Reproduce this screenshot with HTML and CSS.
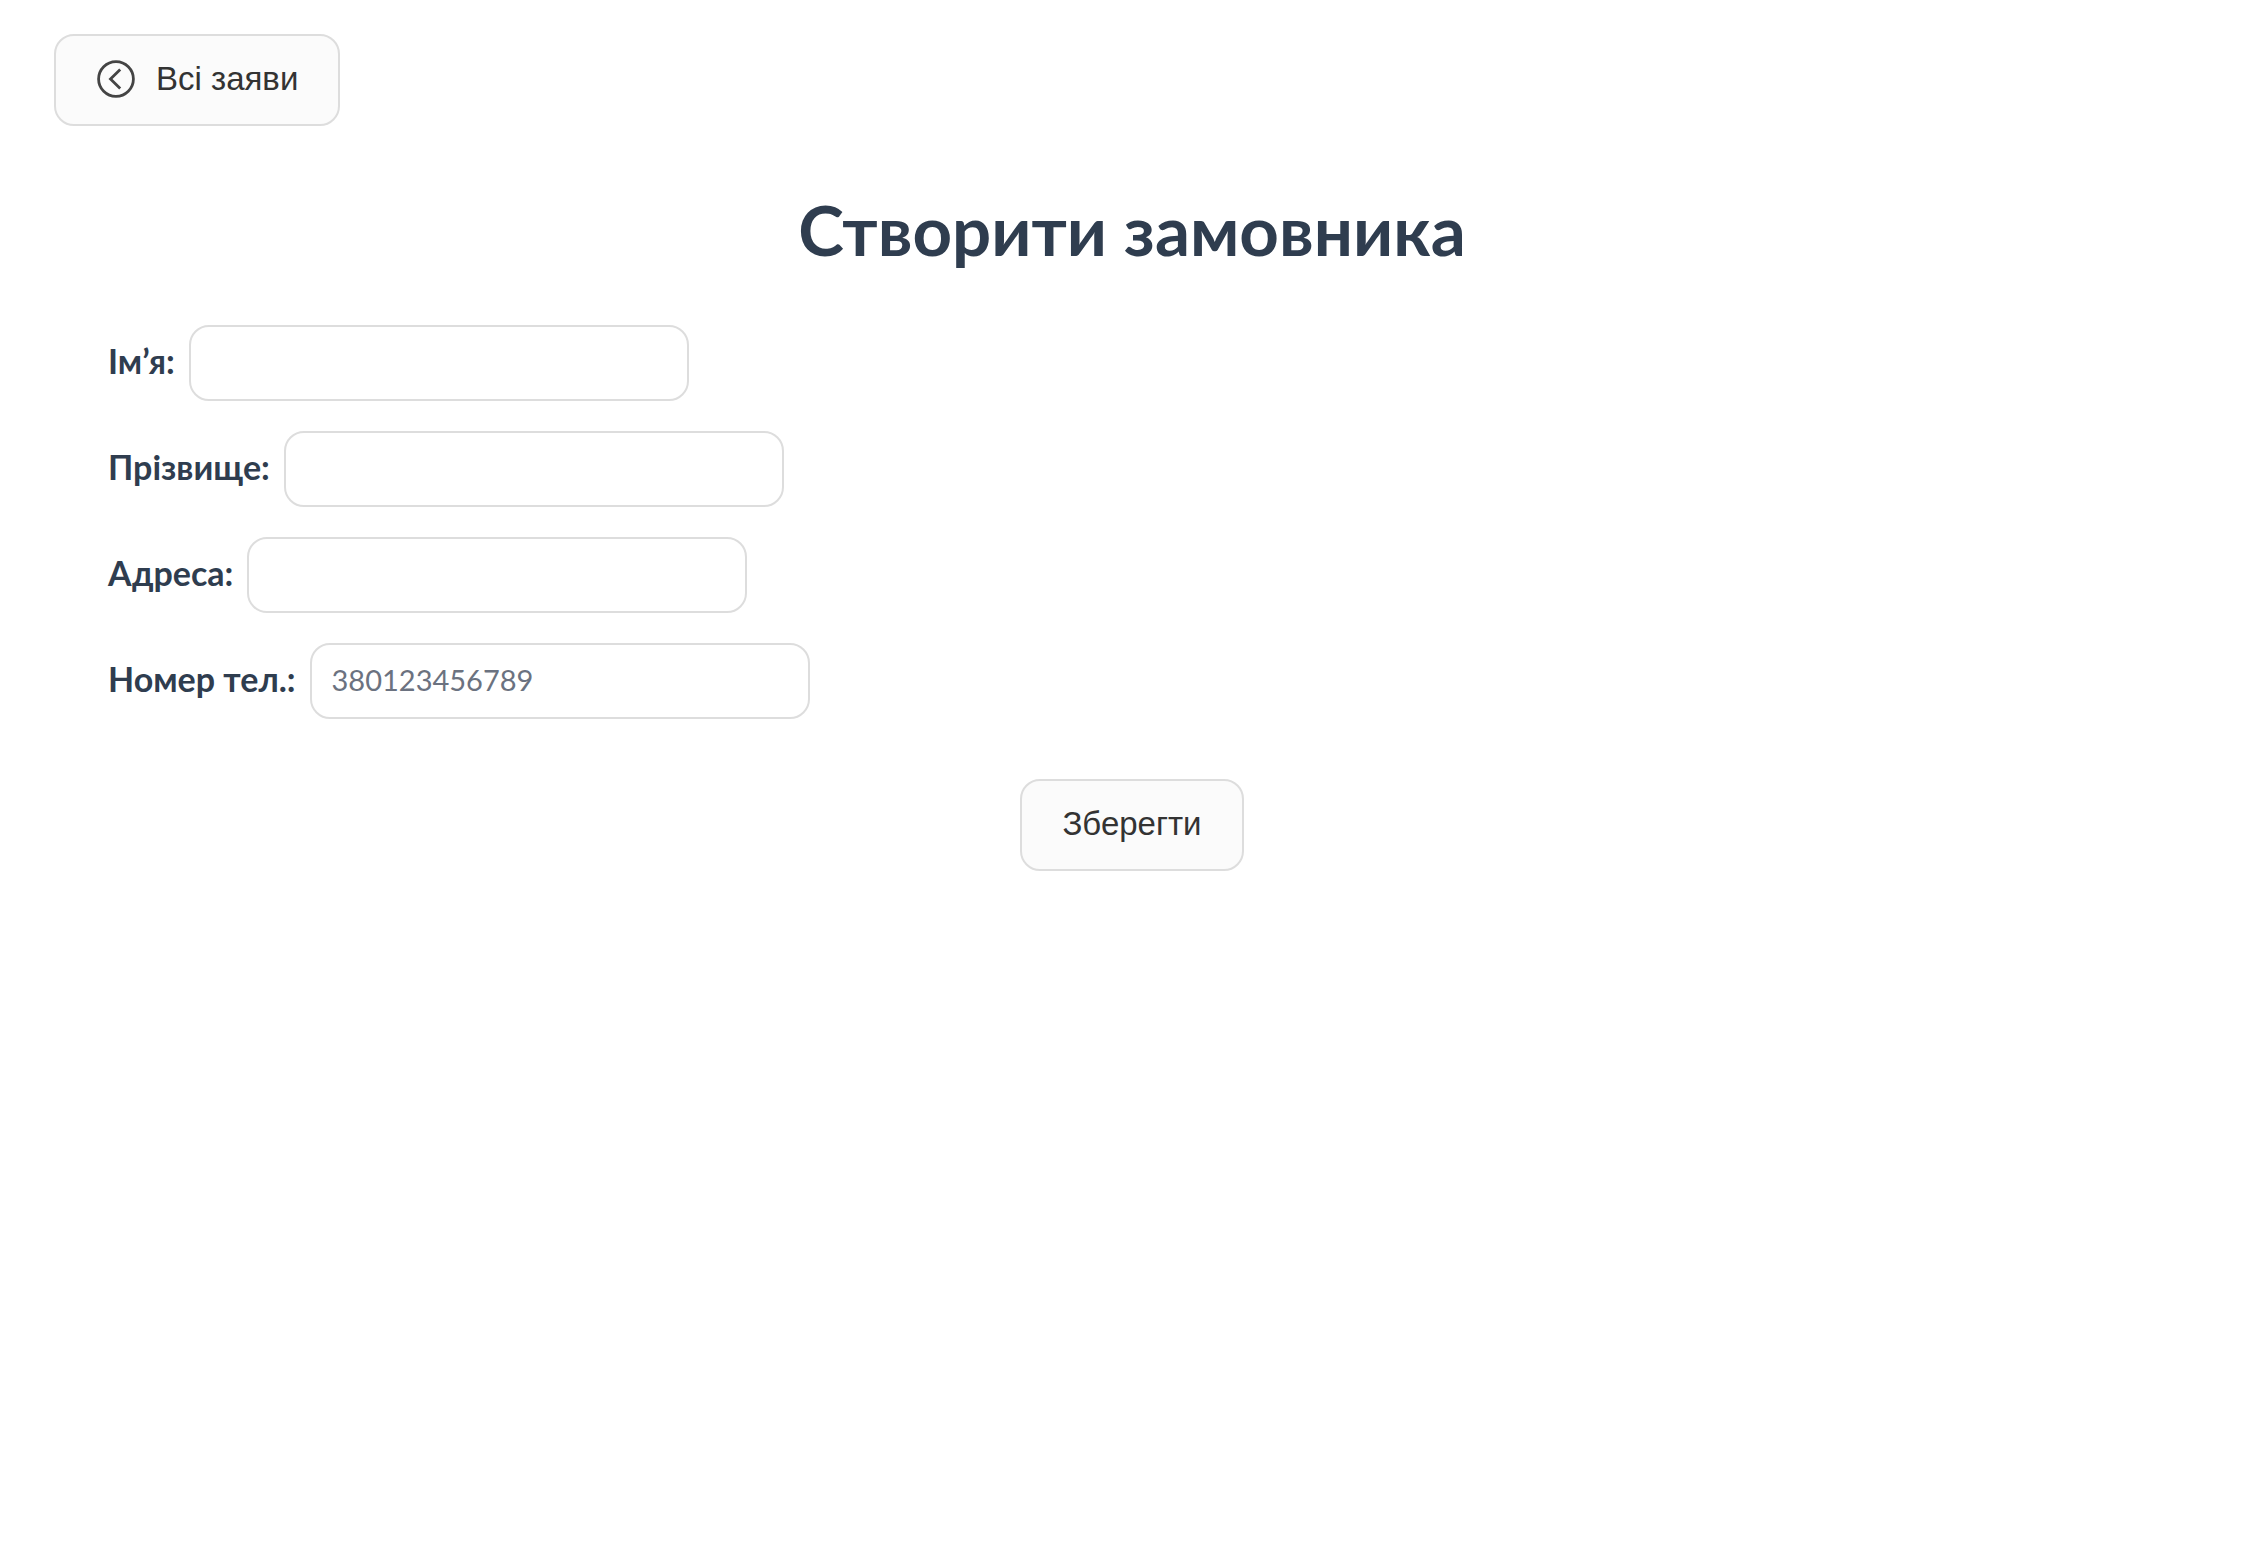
FILE: index.html
```html
<!DOCTYPE html>
<html lang="uk">
<head>
<meta charset="utf-8">
<meta name="viewport" content="width=device-width, initial-scale=1">
<title>Створити замовника</title>
<link rel="stylesheet" href="styles.css">
</head>
<body>
<main class="page">
  <button class="button" type="button">
    <svg class="button-icon" viewBox="0 0 40 40" fill="none" stroke="currentColor" stroke-width="2.8" aria-hidden="true">
      <circle cx="20" cy="20" r="17.4"/>
      <path d="M24.2 10.5 14.5 20l9.7 9.5"/>
    </svg>
    Всі заяви
  </button>
  <h1 class="title">Створити замовника</h1>
  <form class="form">
    <div class="field">
      <label class="label" for="first-name">Ім’я:</label>
      <input class="input" id="first-name" type="text">
    </div>
    <div class="field">
      <label class="label" for="last-name">Прізвище:</label>
      <input class="input" id="last-name" type="text">
    </div>
    <div class="field">
      <label class="label" for="address">Адреса:</label>
      <input class="input" id="address" type="text">
    </div>
    <div class="field">
      <label class="label" for="phone">Номер тел.:</label>
      <input class="input" id="phone" type="tel" placeholder="380123456789">
    </div>
    <button class="button save" type="submit">Зберегти</button>
  </form>
</main>
</body>
</html>
```
FILE: styles.css
```css
* {
  box-sizing: border-box;
}

body {
  margin: 0;
  background: #fff;
  color: #2f3d4f;
  font-family: "Lato", "Noto Sans", sans-serif;
}

.page {
  padding: 34px 54px;
}

.button {
  display: inline-flex;
  align-items: center;
  gap: 20px;
  height: 92px;
  padding: 0 40px 2px;
  border: 2px solid #ddd;
  border-radius: 20px;
  background: #fbfbfb;
  color: #333;
  font: 33px/40px "Liberation Sans", Arial, sans-serif;
}

.button-icon {
  width: 40px;
  height: 40px;
  color: #444;
}

.title {
  margin: 64px 0 55px;
  font-size: 69px;
  font-weight: 700;
  line-height: 80px;
  text-align: center;
}

.form {
  display: flex;
  flex-direction: column;
  gap: 30px;
}

.field {
  display: flex;
  align-items: center;
  gap: 14px;
  padding: 0 54px;
}

.label {
  padding-bottom: 4px;
  font-size: 34px;
  font-weight: 700;
  line-height: 40px;
}

.input {
  width: 500px;
  height: 76px;
  padding: 0 20px 4px;
  border: 2px solid #ddd;
  border-radius: 20px;
  background: #fff;
  color: inherit;
  font: 400 29px/40px "Lato", "Noto Sans", sans-serif;
}

.input::placeholder {
  color: #6b7280;
  opacity: 1;
}

.save {
  align-self: center;
  margin-top: 30px;
}
```
